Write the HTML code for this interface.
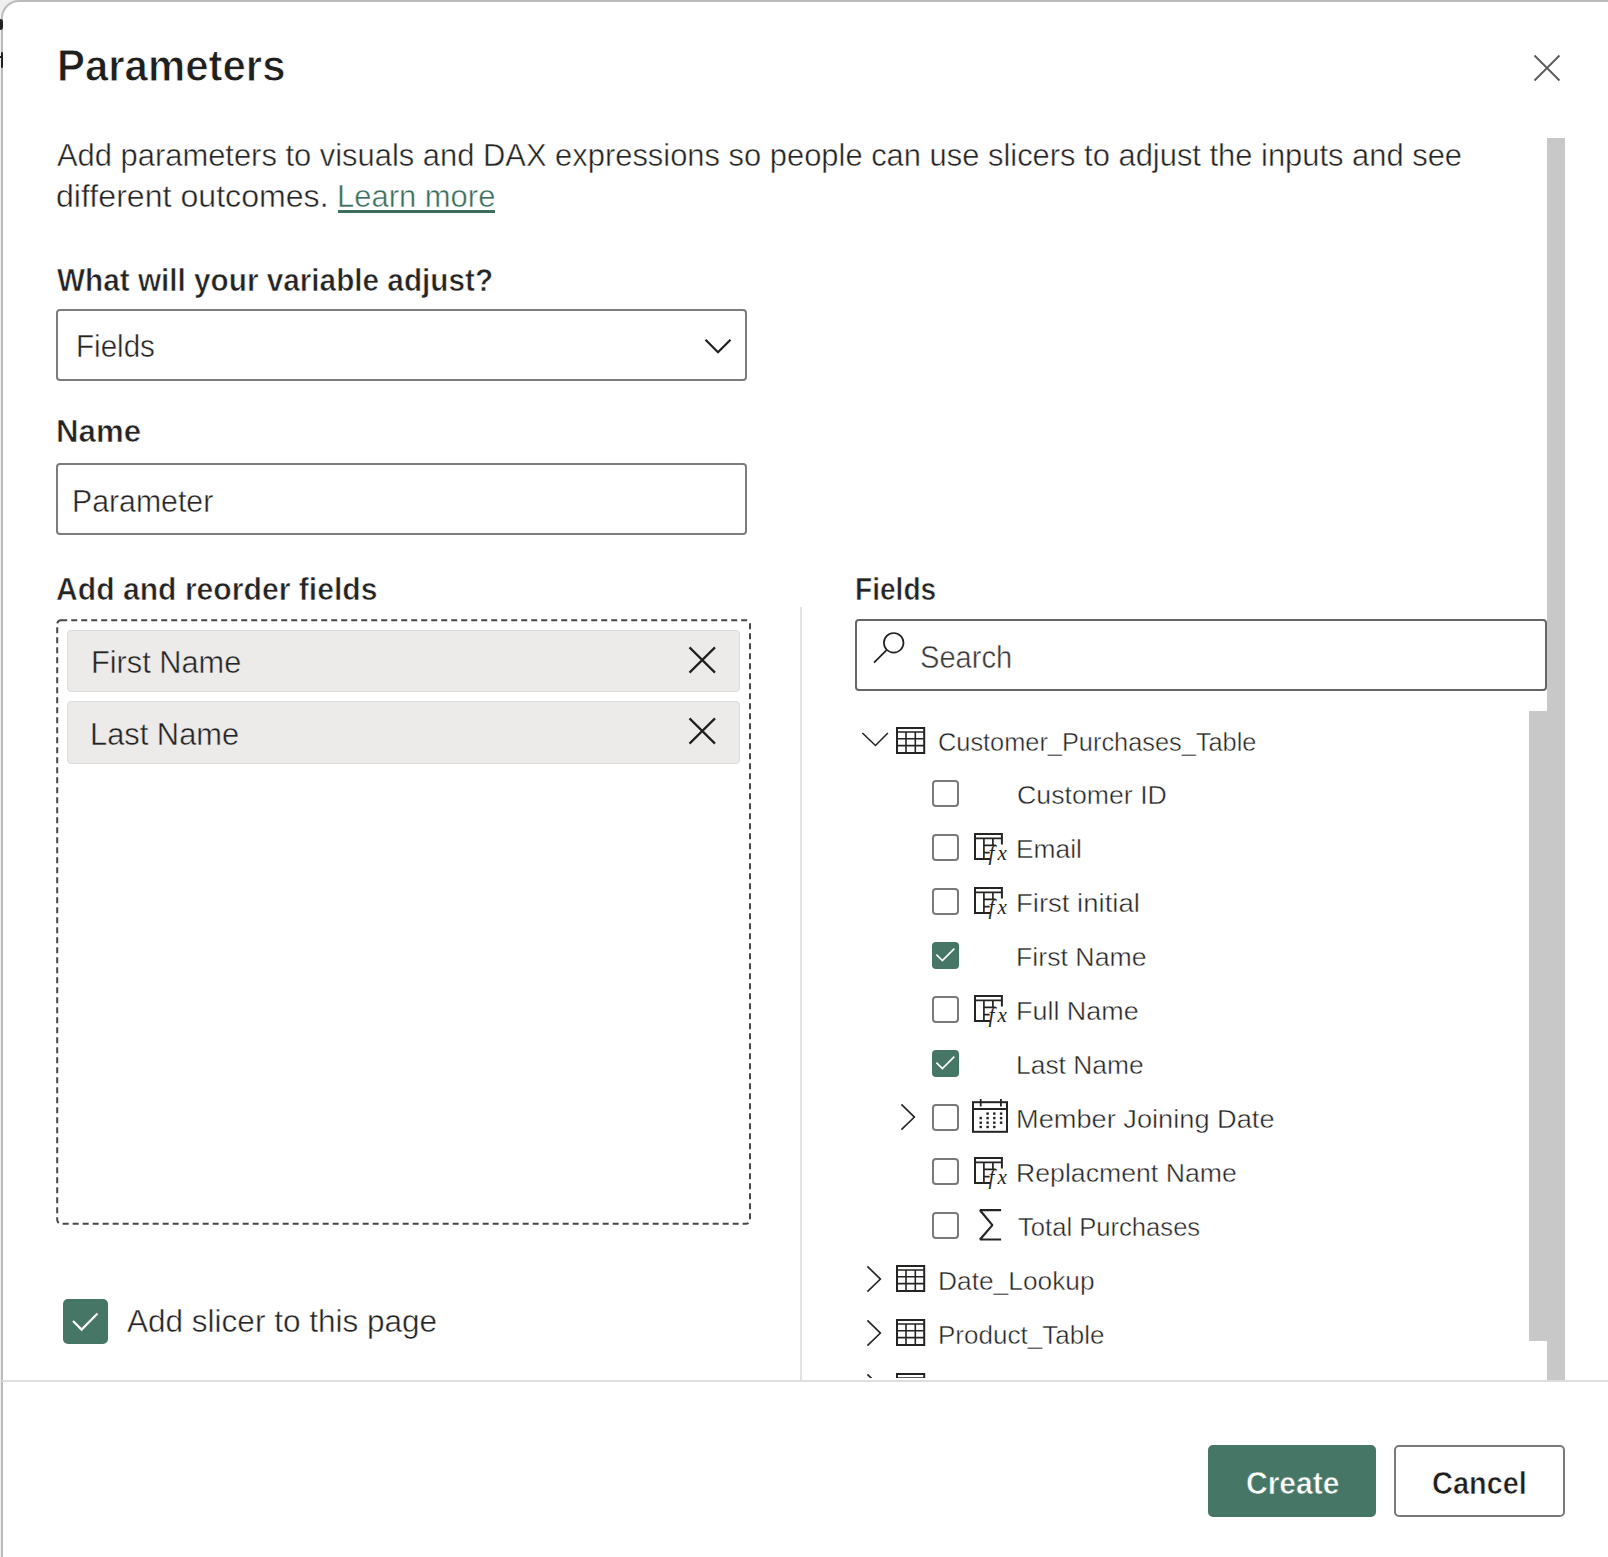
<!DOCTYPE html>
<html><head><meta charset="utf-8"><style>
html,body{margin:0;padding:0;width:1608px;height:1557px;overflow:hidden;background:#efefef;}
.dlg{position:absolute;left:0.5px;top:-0.5px;width:1640px;height:1600px;background:#fff;border:2px solid #bcbcbc;border-radius:18px;box-sizing:border-box}
.a{position:absolute;}
.t{position:absolute;white-space:pre;transform-origin:0 0;font-family:"Liberation Sans",sans-serif;}
.box{border:2px solid #7d7d7d;border-radius:4px;box-sizing:border-box;background:#fff}
.sbox{border:2px solid #666666;border-radius:4px;box-sizing:border-box;background:#fff}
.chip{background:#edebe9;border:1.5px solid #dddbd9;border-radius:4px;box-sizing:border-box}
.cb{border:2px solid #7a7a7a;border-radius:4px;box-sizing:border-box;background:#fff}
svg{overflow:visible}
</style></head><body>
<div class="dlg"></div>
<div class="a" style="left:0;top:19px;width:3px;height:11px;background:#222;border-radius:0 3px 3px 0"></div>
<div class="a" style="left:1.3px;top:52px;width:1.8px;height:16px;background:#222;border-radius:1px"></div>
<div class="a" style="left:0;top:56px;width:2px;height:1.5px;background:#222"></div>
<div class="t" style="left:56.87px;top:44.31px;font-size:44.40px;line-height:44.40px;font-weight:700;color:#201f1e;-webkit-text-stroke:0.9px #fff;transform:scaleX(0.9448);">Parameters</div>
<svg class="a" style="left:1530px;top:51px" width="34" height="34" viewBox="1530 51 34 34"><path d="M1534.5 55.5L1559.5 80.5M1559.5 55.5L1534.5 80.5" stroke="#605e5c" stroke-width="2" fill="none"/></svg>
<div class="t" style="left:56.80px;top:139.68px;font-size:31.20px;line-height:31.20px;color:#242424;-webkit-text-stroke:0.45px #fff;transform:scaleX(0.9908);">Add parameters to visuals and DAX expressions so people can use slicers to adjust the inputs and see</div>
<div class="t" style="left:55.51px;top:181.28px;font-size:31.20px;line-height:31.20px;color:#242424;-webkit-text-stroke:0.45px #fff;transform:scaleX(1.0300);">different outcomes.</div>
<div class="t" style="left:337.22px;top:181.28px;font-size:31.20px;line-height:31.20px;color:#3b6e5e;-webkit-text-stroke:0.45px #fff;transform:scaleX(0.9930);">Learn more</div>
<div class="a" style="left:338px;top:210px;width:157px;height:3px;background:#3b6e5e"></div>
<div class="t" style="left:56.80px;top:264.58px;font-size:31.20px;line-height:31.20px;font-weight:700;color:#242424;-webkit-text-stroke:0.6px #fff;transform:scaleX(0.9531);">What will your variable adjust?</div>
<div class="a box" style="left:56px;top:309px;width:691px;height:72px;"></div>
<div class="t" style="left:76.33px;top:331.38px;font-size:31.20px;line-height:31.20px;color:#242424;-webkit-text-stroke:0.45px #fff;transform:scaleX(0.9484);">Fields</div>
<svg class="a" style="left:700px;top:334px" width="36" height="24" viewBox="700 334 36 24"><path d="M705.5 339.8L718 352.3L730.5 339.8" stroke="#201f1e" stroke-width="2.2" fill="none"/></svg>
<div class="t" style="left:56.47px;top:415.68px;font-size:31.20px;line-height:31.20px;font-weight:700;color:#242424;-webkit-text-stroke:0.6px #fff;transform:scaleX(1.0012);">Name</div>
<div class="a box" style="left:56px;top:463px;width:691px;height:72px;"></div>
<div class="t" style="left:71.58px;top:485.58px;font-size:31.20px;line-height:31.20px;color:#242424;-webkit-text-stroke:0.45px #fff;transform:scaleX(0.9700);">Parameter</div>
<div class="t" style="left:56.25px;top:574.48px;font-size:31.20px;line-height:31.20px;font-weight:700;color:#242424;-webkit-text-stroke:0.6px #fff;transform:scaleX(0.9661);">Add and reorder fields</div>
<svg class="a" style="left:50px;top:612px" width="710" height="620" viewBox="50 612 710 620"><rect x="57.2" y="620.2" width="692.8" height="603.6" rx="4" ry="4" fill="none" stroke="#474747" stroke-width="2" stroke-dasharray="6 4"/></svg>
<div class="a chip" style="left:67px;top:630px;width:673px;height:61.5px;"></div>
<div class="t" style="left:91.04px;top:647.38px;font-size:31.20px;line-height:31.20px;color:#242424;-webkit-text-stroke:0.45px #edebe9;transform:scaleX(0.9854);">First Name</div>
<svg class="a" style="left:684px;top:642.2px" width="36" height="36" viewBox="684 642.2 36 36"><path d="M689.5 647.6L715 672.8M715 647.6L689.5 672.8" stroke="#201f1e" stroke-width="2.2" fill="none"/></svg>
<div class="a chip" style="left:67px;top:701px;width:673px;height:62.5px;"></div>
<div class="t" style="left:89.73px;top:718.78px;font-size:31.20px;line-height:31.20px;color:#242424;-webkit-text-stroke:0.45px #edebe9;transform:scaleX(0.9888);">Last Name</div>
<svg class="a" style="left:684px;top:713.2px" width="36" height="36" viewBox="684 713.2 36 36"><path d="M689.5 718.6L715 743.8M715 718.6L689.5 743.8" stroke="#201f1e" stroke-width="2.2" fill="none"/></svg>
<div class="a" style="left:63px;top:1299px;width:45px;height:45px;background:#467666;border-radius:5px"></div>
<svg class="a" style="left:63px;top:1299px" width="45" height="45" viewBox="63 1299 45 45"><path d="M73 1321L81.6 1329.6L97.5 1313.5" stroke="#fff" stroke-width="2.2" fill="none"/></svg>
<div class="t" style="left:126.70px;top:1306.18px;font-size:31.20px;line-height:31.20px;color:#242424;-webkit-text-stroke:0.45px #fff;transform:scaleX(1.0105);">Add slicer to this page</div>
<div class="a" style="left:800px;top:607px;width:2px;height:773px;background:#e1e1e1"></div>
<div class="t" style="left:855.47px;top:574.38px;font-size:31.20px;line-height:31.20px;font-weight:700;color:#242424;-webkit-text-stroke:0.6px #fff;transform:scaleX(0.9011);">Fields</div>
<div class="a sbox" style="left:855px;top:619px;width:692px;height:72px;"></div>
<svg class="a" style="left:868px;top:626px" width="40" height="44" viewBox="868 626 40 44"><circle cx="893.7" cy="642.8" r="9.8" stroke="#201f1e" stroke-width="1.7" fill="none"/><path d="M874 662.7L886.6 650.1" stroke="#201f1e" stroke-width="1.7" fill="none"/></svg>
<div class="t" style="left:920.29px;top:641.78px;font-size:31.20px;line-height:31.20px;color:#3b3a39;-webkit-text-stroke:0.45px #fff;transform:scaleX(0.9337);">Search</div>
<svg class="a" style="left:860px;top:730px" width="30" height="18" viewBox="0 0 30 18"><path d="M2.4 3L15.5 15.5L27.9 3" stroke="#252423" stroke-width="1.6" fill="none"/></svg>
<svg class="a" style="left:895.6px;top:726.6px" width="30" height="28" viewBox="0 0 30 28"><rect x="1" y="1" width="27.2" height="25" fill="none" stroke="#252423" stroke-width="2"/><path d="M1 5H28.2M1 11.7H28.2M1 18.6H28.2M10 5V26M19.3 5V26" stroke="#252423" stroke-width="1.6" fill="none"/></svg>
<div class="t" style="left:938.33px;top:728.73px;font-size:26.30px;line-height:26.30px;color:#242424;-webkit-text-stroke:0.45px #fff;transform:scaleX(0.9639);">Customer_Purchases_Table</div>
<div class="a cb" style="left:932px;top:780px;width:27px;height:27px;"></div>
<div class="t" style="left:1016.86px;top:781.63px;font-size:26.30px;line-height:26.30px;color:#242424;-webkit-text-stroke:0.45px #fff;transform:scaleX(1.0156);">Customer ID</div>
<div class="a cb" style="left:932px;top:834px;width:27px;height:27px;"></div>
<svg class="a" style="left:974.3px;top:833.2px" width="36" height="34" viewBox="0 0 36 34"><path d="M27.9 11.4V1H1V26.1H16.2" stroke="#252423" stroke-width="2" fill="none"/><path d="M1 5.3H27.9M9.9 5.3V26M18.9 5.3V11.8M9.9 12.4H21.7M9.9 19.6H15.7" stroke="#252423" stroke-width="1.7" fill="none"/><text x="14.6" y="26.9" font-family="Liberation Serif" font-style="italic" font-size="21" letter-spacing="3" fill="#252423">fx</text></svg>
<div class="t" style="left:1016.09px;top:835.63px;font-size:26.30px;line-height:26.30px;color:#242424;-webkit-text-stroke:0.45px #fff;transform:scaleX(1.0026);">Email</div>
<div class="a cb" style="left:932px;top:888px;width:27px;height:27px;"></div>
<svg class="a" style="left:974.3px;top:887.2px" width="36" height="34" viewBox="0 0 36 34"><path d="M27.9 11.4V1H1V26.1H16.2" stroke="#252423" stroke-width="2" fill="none"/><path d="M1 5.3H27.9M9.9 5.3V26M18.9 5.3V11.8M9.9 12.4H21.7M9.9 19.6H15.7" stroke="#252423" stroke-width="1.7" fill="none"/><text x="14.6" y="26.9" font-family="Liberation Serif" font-style="italic" font-size="21" letter-spacing="3" fill="#252423">fx</text></svg>
<div class="t" style="left:1016.00px;top:889.63px;font-size:26.30px;line-height:26.30px;color:#242424;-webkit-text-stroke:0.45px #fff;transform:scaleX(1.0460);">First initial</div>
<div class="a" style="left:932px;top:942px;width:27px;height:27px;background:#467666;border-radius:4px"></div><svg class="a" style="left:932px;top:942px" width="27" height="27" viewBox="0 0 27 27"><path d="M4.4 12.6L10.4 18.5L22.3 6.6" stroke="#fff" stroke-width="1.7" fill="none"/></svg>
<div class="t" style="left:1016.06px;top:943.63px;font-size:26.30px;line-height:26.30px;color:#242424;-webkit-text-stroke:0.45px #fff;transform:scaleX(1.0158);">First Name</div>
<div class="a cb" style="left:932px;top:996px;width:27px;height:27px;"></div>
<svg class="a" style="left:974.3px;top:995.2px" width="36" height="34" viewBox="0 0 36 34"><path d="M27.9 11.4V1H1V26.1H16.2" stroke="#252423" stroke-width="2" fill="none"/><path d="M1 5.3H27.9M9.9 5.3V26M18.9 5.3V11.8M9.9 12.4H21.7M9.9 19.6H15.7" stroke="#252423" stroke-width="1.7" fill="none"/><text x="14.6" y="26.9" font-family="Liberation Serif" font-style="italic" font-size="21" letter-spacing="3" fill="#252423">fx</text></svg>
<div class="t" style="left:1016.05px;top:997.63px;font-size:26.30px;line-height:26.30px;color:#242424;-webkit-text-stroke:0.45px #fff;transform:scaleX(1.0240);">Full Name</div>
<div class="a" style="left:932px;top:1050px;width:27px;height:27px;background:#467666;border-radius:4px"></div><svg class="a" style="left:932px;top:1050px" width="27" height="27" viewBox="0 0 27 27"><path d="M4.4 12.6L10.4 18.5L22.3 6.6" stroke="#fff" stroke-width="1.7" fill="none"/></svg>
<div class="t" style="left:1016.09px;top:1051.63px;font-size:26.30px;line-height:26.30px;color:#242424;-webkit-text-stroke:0.45px #fff;transform:scaleX(1.0043);">Last Name</div>
<div class="a cb" style="left:932px;top:1104px;width:27px;height:27px;"></div>
<svg class="a" style="left:971.9px;top:1098.9px" width="38" height="36" viewBox="0 0 38 36"><rect x="1" y="3.2" width="34" height="29.6" fill="none" stroke="#252423" stroke-width="2"/><path d="M1 10H35M8.7 0V7.5M28.9 0V7.5" stroke="#252423" stroke-width="1.8" fill="none"/><rect x="14.4" y="13.4" width="2.4" height="2.4" fill="#252423"/><rect x="21.1" y="13.4" width="2.4" height="2.4" fill="#252423"/><rect x="27.900000000000002" y="13.4" width="2.4" height="2.4" fill="#252423"/><rect x="7.499999999999999" y="17.900000000000002" width="2.4" height="2.4" fill="#252423"/><rect x="14.4" y="17.900000000000002" width="2.4" height="2.4" fill="#252423"/><rect x="21.1" y="17.900000000000002" width="2.4" height="2.4" fill="#252423"/><rect x="27.900000000000002" y="17.900000000000002" width="2.4" height="2.4" fill="#252423"/><rect x="7.499999999999999" y="22.5" width="2.4" height="2.4" fill="#252423"/><rect x="14.4" y="22.5" width="2.4" height="2.4" fill="#252423"/><rect x="21.1" y="22.5" width="2.4" height="2.4" fill="#252423"/><rect x="27.900000000000002" y="22.5" width="2.4" height="2.4" fill="#252423"/><rect x="7.499999999999999" y="26.8" width="2.4" height="2.4" fill="#252423"/><rect x="14.4" y="26.8" width="2.4" height="2.4" fill="#252423"/><rect x="21.1" y="26.8" width="2.4" height="2.4" fill="#252423"/></svg>
<svg class="a" style="left:899.3px;top:1103px" width="18" height="30" viewBox="0 0 18 30"><path d="M2.4 1.4L15.4 14.1L2.4 26.6" stroke="#252423" stroke-width="1.6" fill="none"/></svg>
<div class="t" style="left:1016.02px;top:1105.63px;font-size:26.30px;line-height:26.30px;color:#242424;-webkit-text-stroke:0.45px #fff;transform:scaleX(1.0345);">Member Joining Date</div>
<div class="a cb" style="left:932px;top:1158px;width:27px;height:27px;"></div>
<svg class="a" style="left:974.3px;top:1157.2px" width="36" height="34" viewBox="0 0 36 34"><path d="M27.9 11.4V1H1V26.1H16.2" stroke="#252423" stroke-width="2" fill="none"/><path d="M1 5.3H27.9M9.9 5.3V26M18.9 5.3V11.8M9.9 12.4H21.7M9.9 19.6H15.7" stroke="#252423" stroke-width="1.7" fill="none"/><text x="14.6" y="26.9" font-family="Liberation Serif" font-style="italic" font-size="21" letter-spacing="3" fill="#252423">fx</text></svg>
<div class="t" style="left:1016.07px;top:1159.63px;font-size:26.30px;line-height:26.30px;color:#242424;-webkit-text-stroke:0.45px #fff;transform:scaleX(1.0136);">Replacment Name</div>
<div class="a cb" style="left:932px;top:1212px;width:27px;height:27px;"></div>
<svg class="a" style="left:974px;top:1206px" width="28" height="36" viewBox="0 0 28 36"><path d="M27.1 4.2H6L18.4 19.1L6 33.5H27.1" stroke="#252423" stroke-width="2.2" fill="none" stroke-linejoin="bevel"/></svg>
<div class="t" style="left:1017.69px;top:1213.63px;font-size:26.30px;line-height:26.30px;color:#242424;-webkit-text-stroke:0.45px #fff;transform:scaleX(0.9737);">Total Purchases</div>
<svg class="a" style="left:865px;top:1265px" width="18" height="30" viewBox="0 0 18 30"><path d="M2.4 1.4L15.4 14.1L2.4 26.6" stroke="#252423" stroke-width="1.6" fill="none"/></svg>
<svg class="a" style="left:895.6px;top:1265.4px" width="30" height="28" viewBox="0 0 30 28"><rect x="1" y="1" width="27.2" height="25" fill="none" stroke="#252423" stroke-width="2"/><path d="M1 5H28.2M1 11.7H28.2M1 18.6H28.2M10 5V26M19.3 5V26" stroke="#252423" stroke-width="1.6" fill="none"/></svg>
<div class="t" style="left:938.39px;top:1267.93px;font-size:26.30px;line-height:26.30px;color:#242424;-webkit-text-stroke:0.45px #fff;transform:scaleX(1.0011);">Date_Lookup</div>
<svg class="a" style="left:865px;top:1319px" width="18" height="30" viewBox="0 0 18 30"><path d="M2.4 1.4L15.4 14.1L2.4 26.6" stroke="#252423" stroke-width="1.6" fill="none"/></svg>
<svg class="a" style="left:895.6px;top:1319.4px" width="30" height="28" viewBox="0 0 30 28"><rect x="1" y="1" width="27.2" height="25" fill="none" stroke="#252423" stroke-width="2"/><path d="M1 5H28.2M1 11.7H28.2M1 18.6H28.2M10 5V26M19.3 5V26" stroke="#252423" stroke-width="1.6" fill="none"/></svg>
<div class="t" style="left:938.42px;top:1321.93px;font-size:26.30px;line-height:26.30px;color:#242424;-webkit-text-stroke:0.45px #fff;transform:scaleX(0.9905);">Product_Table</div>
<svg class="a" style="left:865px;top:1373px" width="18" height="30" viewBox="0 0 18 30"><path d="M2.4 1.4L15.4 14.1L2.4 26.6" stroke="#252423" stroke-width="1.6" fill="none"/></svg>
<svg class="a" style="left:895.6px;top:1373.4px" width="30" height="28" viewBox="0 0 30 28"><rect x="1" y="1" width="27.2" height="25" fill="none" stroke="#252423" stroke-width="2"/><path d="M1 5H28.2M1 11.7H28.2M1 18.6H28.2M10 5V26M19.3 5V26" stroke="#252423" stroke-width="1.6" fill="none"/></svg>
<div class="a" style="left:820px;top:1378px;width:708px;height:60px;background:#fff"></div>
<div class="a" style="left:1547px;top:138px;width:18px;height:1242px;background:#c8c8c8"></div>
<div class="a" style="left:1529px;top:711px;width:18px;height:630px;background:#c8c8c8"></div>
<div class="a" style="left:2px;top:1380px;width:1606px;height:2px;background:#dedede"></div>
<div class="a" style="left:1208px;top:1445px;width:168px;height:72px;background:#467666;border-radius:5px"></div>
<div class="t" style="left:1246.00px;top:1468.48px;font-size:31.20px;line-height:31.20px;font-weight:700;color:#ffffff;-webkit-text-stroke:0.6px #467666;transform:scaleX(0.9610);">Create</div>
<div class="a" style="left:1394px;top:1445px;width:170.5px;height:71.5px;border:2px solid #7a7a7a;border-radius:5px;box-sizing:border-box"></div>
<div class="t" style="left:1432.44px;top:1468.48px;font-size:31.20px;line-height:31.20px;font-weight:700;color:#201f1e;-webkit-text-stroke:0.6px #fff;transform:scaleX(0.9272);">Cancel</div>
</body></html>
